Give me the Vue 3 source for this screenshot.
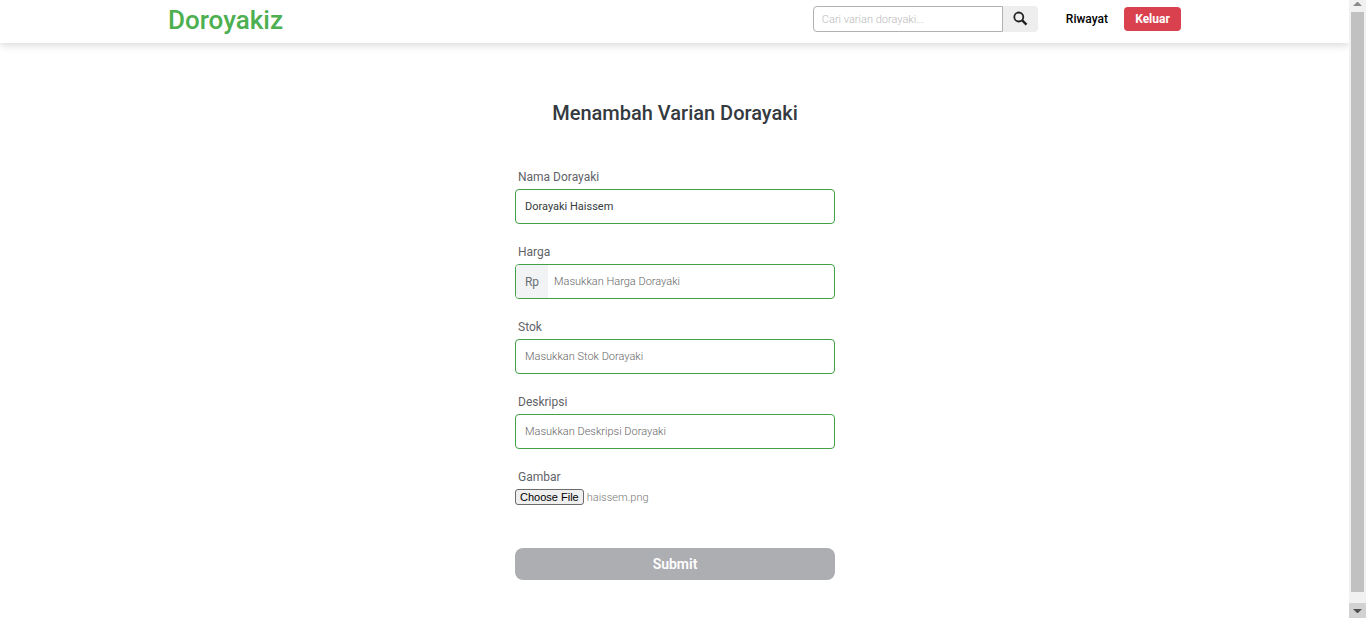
<script setup>
import { onMounted, ref } from 'vue'

const query = ref('')
const name = ref('Dorayaki Haissem')
const price = ref('')
const stock = ref('')
const description = ref('')
const picture = ref(null)

onMounted(() => {
  const transfer = new DataTransfer()
  transfer.items.add(new File([''], 'haissem.png', { type: 'image/png' }))
  picture.value.files = transfer.files
})
</script>

<template>
  <div class="window">
    <div class="page">
      <header class="navbar">
        <a class="brand" href="#">Doroyakiz</a>
        <nav class="menu">
          <form class="search" role="search" @submit.prevent>
            <input v-model="query" class="search-input" type="text" placeholder="Cari varian dorayaki..." aria-label="Cari varian dorayaki" />
            <button class="search-button" type="submit" aria-label="Cari">
              <svg width="16" height="16" viewBox="0 0 16 16" fill="none" stroke="#222" aria-hidden="true">
                <circle cx="6.8" cy="6" r="4.5" stroke-width="1.8" />
                <path d="M10.2 9.4 L14.5 13.7" stroke-width="2.4" />
              </svg>
            </button>
          </form>
          <a class="history" href="#">Riwayat</a>
          <button class="logout" type="button">Keluar</button>
        </nav>
      </header>

      <main class="content">
        <h1 class="title">Menambah Varian Dorayaki</h1>
        <form class="form" @submit.prevent>
          <div class="field">
            <label for="name">Nama Dorayaki</label>
            <div class="box"><input id="name" v-model="name" type="text" placeholder="Masukkan Nama Dorayaki" /></div>
          </div>
          <div class="field">
            <label for="price">Harga</label>
            <div class="box">
              <span class="prefix">Rp</span>
              <input id="price" v-model="price" class="after-prefix" type="text" placeholder="Masukkan Harga Dorayaki" />
            </div>
          </div>
          <div class="field">
            <label for="stock">Stok</label>
            <div class="box"><input id="stock" v-model="stock" type="text" placeholder="Masukkan Stok Dorayaki" /></div>
          </div>
          <div class="field">
            <label for="description">Deskripsi</label>
            <div class="box"><input id="description" v-model="description" type="text" placeholder="Masukkan Deskripsi Dorayaki" /></div>
          </div>
          <div class="field">
            <label for="picture">Gambar</label>
            <input id="picture" ref="picture" class="file" type="file" accept="image/*" />
          </div>
          <button class="submit" type="submit">Submit</button>
        </form>
      </main>
    </div>

    <div class="scrollbar" aria-hidden="true">
      <svg class="arrow" width="17" height="12" viewBox="0 0 17 12"><path d="M4 6 L8 2 H9 L13 6 Z" fill="#8b8b8b" /></svg>
      <div class="thumb"></div>
      <svg class="arrow arrow-down" width="17" height="15" viewBox="0 0 17 15"><path d="M4 6 H13 L9 10 H8 Z" fill="#505050" /></svg>
    </div>
  </div>
</template>

<style>
body {
  margin: 0;
  background: #fff;
}
</style>

<style scoped>
* {
  box-sizing: border-box;
}

.window {
  display: flex;
  min-height: 100vh;
  font-family: Roboto, Inter, sans-serif;
  font-size: 12px;
  color: #343a40;
}

.page {
  flex: 1;
  min-width: 0;
}

input,
button {
  font-family: inherit;
}

.navbar {
  display: flex;
  align-items: center;
  justify-content: space-between;
  min-height: 43px;
  padding: 0 168px 5px;
  box-shadow: 0 2px 8px rgba(0, 0, 0, 0.16);
}

.brand {
  padding-top: 3px;
  font-size: 26px;
  line-height: 35px;
  font-weight: 500;
  color: #4caf50;
  text-decoration: none;
}

.menu,
.search {
  display: flex;
  align-items: center;
}

.search-input {
  width: 190px;
  height: 26px;
  padding: 0 8px;
  border: 1px solid #b1b1b1;
  border-radius: 4px 0 0 4px;
  font-size: 11px;
  font-weight: 300;
  outline: none;
}

.search-input::placeholder {
  color: #b9b9b9;
}

.search-button {
  display: flex;
  align-items: center;
  justify-content: center;
  width: 35px;
  height: 26px;
  padding: 0;
  border: 0;
  border-radius: 0 4px 4px 0;
  background: #eee;
}

.history {
  margin: 0 16px 0 28px;
  font-weight: 500;
  color: #000;
  text-decoration: none;
}

.logout {
  width: 57px;
  height: 24px;
  padding: 0;
  border: 0;
  border-radius: 4px;
  background: #d9414e;
  color: #fff;
  font-size: 12px;
  font-weight: 700;
}

.content {
  display: flex;
  flex-direction: column;
  align-items: center;
  padding: 56px 15px 32px 16px;
}

.title {
  margin: 0 0 40px;
  font-size: 20px;
  line-height: 28px;
  font-weight: 500;
}

.form {
  width: 100%;
  max-width: 320px;
}

.field {
  margin-bottom: 18px;
}

.field label {
  display: block;
  padding: 0 3px;
  margin-bottom: 2px;
  line-height: 20px;
  font-weight: 400;
  color: #5f6368;
}

.box {
  display: flex;
  height: 35px;
  border: 1px solid #43a047;
  border-radius: 4px;
}

.box input {
  flex: 1;
  min-width: 0;
  padding: 0 9px;
  border: 0;
  outline: none;
  background: transparent;
  color: #343a40;
  font-size: 11px;
  font-weight: 400;
}

.box input::placeholder {
  color: #666;
  font-weight: 300;
}

.prefix {
  display: flex;
  align-items: center;
  justify-content: center;
  width: 32px;
  border-radius: 3px 0 0 3px;
  background: #f1f3f5;
  color: #6c6e72;
}

.box .after-prefix {
  padding-left: 6px;
}

.file {
  display: block;
  width: 100%;
  height: 16px;
  font-size: 11px;
  line-height: 16px;
  font-weight: 300;
  color: #777;
}

.file::file-selector-button {
  height: 16px;
  margin: 0 3px 0 0;
  padding: 0 4px;
  border: 1px solid #6b6b6b;
  border-radius: 3px;
  background: #efefef;
  color: #000;
  font-family: "Liberation Sans", Arial, sans-serif;
  font-size: 11px;
  line-height: 14px;
  font-weight: 400;
}

.submit {
  width: 100%;
  height: 32px;
  margin-top: 25px;
  padding: 0;
  border: 0;
  border-radius: 8px;
  background: #adaeb2;
  color: #fff;
  font-size: 14px;
  font-weight: 600;
}

.scrollbar {
  position: sticky;
  top: 0;
  display: flex;
  flex-direction: column;
  width: 17px;
  height: 100vh;
  background: #f1f1f1;
}

.arrow {
  display: block;
  flex: none;
}

.arrow-down {
  background: #d2d2d2;
}

.thumb {
  flex: 1;
  margin: 0 2px 11px;
  background: #c1c1c1;
}
</style>
